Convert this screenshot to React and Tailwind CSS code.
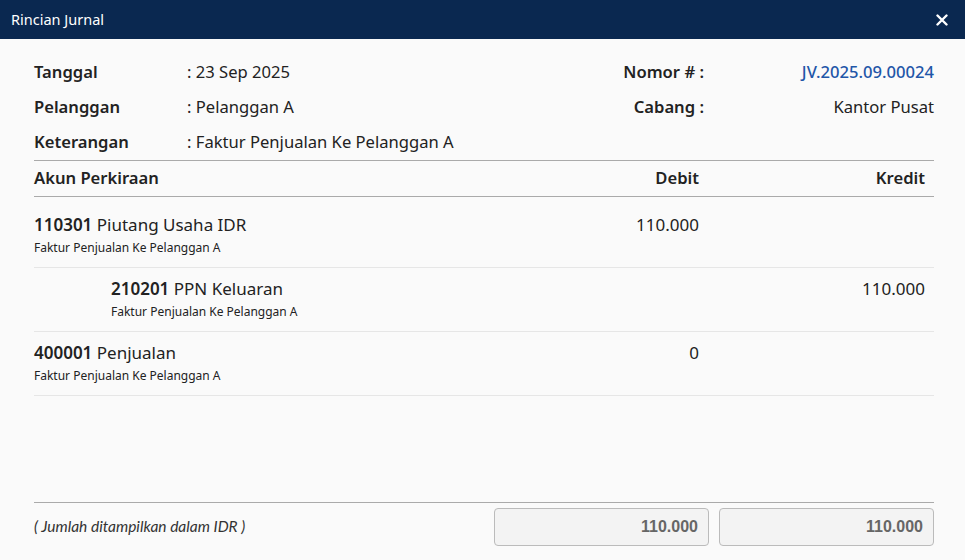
import React from 'react'

const rows = [
  { code: '110301', name: 'Piutang Usaha IDR', note: 'Faktur Penjualan Ke Pelanggan A', debit: '110.000', kredit: '', indent: false },
  { code: '210201', name: 'PPN Keluaran', note: 'Faktur Penjualan Ke Pelanggan A', debit: '', kredit: '110.000', indent: true },
  { code: '400001', name: 'Penjualan', note: 'Faktur Penjualan Ke Pelanggan A', debit: '0', kredit: '', indent: false },
]

const InfoRow = ({ label, value }) => (
  <div className="flex h-[35px] items-center">
    <span className="w-[153px] font-semibold">{label}</span>
    <span>: {value}</span>
  </div>
)

export default function App() {
  return (
    <div className="flex h-[560px] w-[965px] flex-col bg-[#fafafa] text-[#222] font-['Noto_Sans',sans-serif]">
      {/* Header */}
      <div className="flex h-[39px] shrink-0 items-center justify-between bg-[#0a2850] pl-[11px] pr-[17px] text-white">
        <span className="text-[14.5px]">Rincian Jurnal</span>
        <svg width="12" height="12" viewBox="0 0 12 12" fill="none" stroke="white" strokeWidth="2.4" strokeLinecap="round">
          <path d="M1.5 1.5 10.5 10.5M10.5 1.5 1.5 10.5" />
        </svg>
      </div>

      <div className="flex flex-1 flex-col pl-[34px] pr-[31px] pt-[16px] pb-[14px]">
        {/* Info */}
        <div className="flex text-[16.6px]">
          <div className="flex-1">
            <InfoRow label="Tanggal" value="23 Sep 2025" />
            <InfoRow label="Pelanggan" value="Pelanggan A" />
            <InfoRow label="Keterangan" value="Faktur Penjualan Ke Pelanggan A" />
          </div>
          <div className="flex w-[330px] flex-col">
            <div className="flex h-[35px] items-center">
              <span className="w-[100px] text-right font-semibold">Nomor # :</span>
              <span className="flex-1 text-right font-medium text-[#1f56a8]">JV.2025.09.00024</span>
            </div>
            <div className="flex h-[35px] items-center">
              <span className="w-[100px] text-right font-semibold">Cabang :</span>
              <span className="flex-1 text-right">Kantor Pusat</span>
            </div>
          </div>
        </div>

        {/* Table head */}
        <div className="grid h-[37px] grid-cols-[1fr_215px_215px] items-center gap-x-[10px] border-y border-[#aaa] text-[16.6px] font-semibold">
          <span>Akun Perkiraan</span>
          <span className="pr-[10px] text-right">Debit</span>
          <span className="pr-[9px] text-right">Kredit</span>
        </div>

        {/* Rows */}
        <div className="pt-[7px]">
          {rows.map((r) => (
            <div key={r.code} className="grid h-[64px] grid-cols-[1fr_215px_215px] gap-x-[10px] border-b border-[#e6e6e6] pt-[9px]">
              <div className={r.indent ? 'pl-[77px]' : ''}>
                <div className="text-[17px] leading-[24px]">
                  <span className="font-semibold">{r.code}</span> {r.name}
                </div>
                <div className="mt-[3px] text-[12px] leading-[16px]">{r.note}</div>
              </div>
              <div className="pr-[10px] text-right text-[17px] leading-[24px]">{r.debit}</div>
              <div className="pr-[9px] text-right text-[17px] leading-[24px]">{r.kredit}</div>
            </div>
          ))}
        </div>

        <div className="flex-1" />

        {/* Footer */}
        <div className="grid grid-cols-[1fr_215px_215px] gap-x-[10px] border-t border-[#aaa] pt-[5px]">
          <span className="self-center text-[15.5px] italic font-['Lato',sans-serif] text-[#333]">( Jumlah ditampilkan dalam IDR )</span>
          <div className="flex h-[38px] items-center justify-end rounded-[4px] border border-[#bbb] bg-[#f3f3f3] px-[10px] text-[16px] font-bold text-[#666] font-['Liberation_Sans',sans-serif]">110.000</div>
          <div className="flex h-[38px] items-center justify-end rounded-[4px] border border-[#bbb] bg-[#f3f3f3] px-[10px] text-[16px] font-bold text-[#666] font-['Liberation_Sans',sans-serif]">110.000</div>
        </div>
      </div>
    </div>
  )
}
